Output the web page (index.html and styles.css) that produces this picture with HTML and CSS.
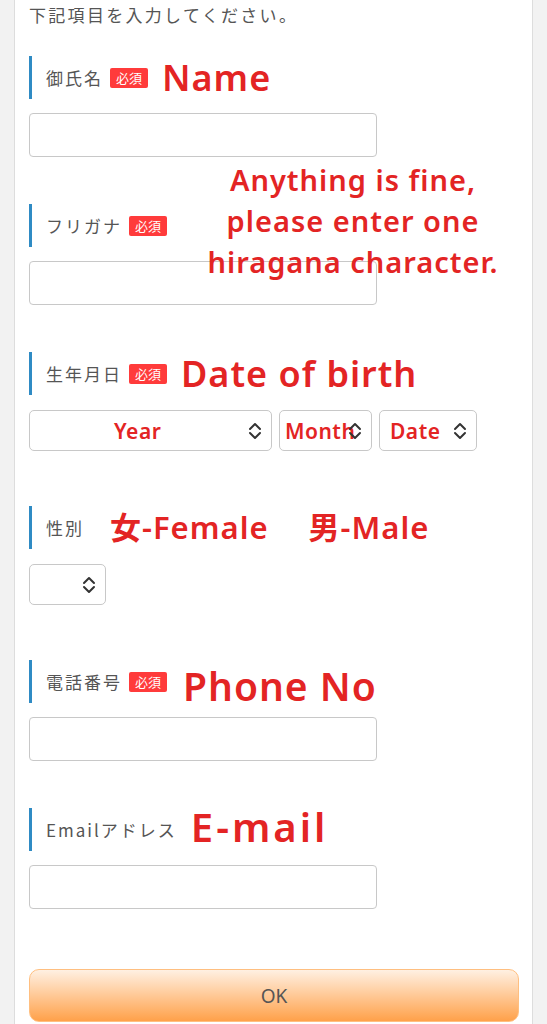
FILE: index.html
```html
<!DOCTYPE html>
<html lang="ja">
<head>
    <meta charset="UTF-8">
    <meta name="viewport" content="width=device-width, initial-scale=1.0">
    <title>お申し込みフォーム</title>
    <link rel="stylesheet" href="styles.css">
</head>
<body>
    <div class="page">
        <div class="panel">
            <p class="lead">下記項目を入力してください。</p>

            <div class="field">
                <div class="label">御氏名<span class="req">必須</span><span class="note">Name</span></div>
                <input type="text" class="text-input">
            </div>

            <div class="field furigana">
                <div class="label">フリガナ<span class="req">必須</span></div>
                <input type="text" class="text-input">
                <div class="note note-block">Anything is fine,<br>please enter one<br>hiragana character.</div>
            </div>

            <div class="field field-select">
                <div class="label">生年月日<span class="req">必須</span><span class="note">Date of birth</span></div>
                <div class="select-row">
                    <div class="select sel-year"><span class="note-sm">Year</span><svg class="chev" viewBox="0 0 14 18"><path d="M2 7l5-5 5 5M2 11l5 5 5-5" /></svg></div>
                    <div class="select sel-month"><span class="note-sm">Month</span><svg class="chev" viewBox="0 0 14 18"><path d="M2 7l5-5 5 5M2 11l5 5 5-5" /></svg></div>
                    <div class="select sel-date"><span class="note-sm">Date</span><svg class="chev" viewBox="0 0 14 18"><path d="M2 7l5-5 5 5M2 11l5 5 5-5" /></svg></div>
                </div>
            </div>

            <div class="field field-select">
                <div class="label">性別<span class="note note-gender">女-Female</span><span class="note note-gender male">男-Male</span></div>
                <div class="select-row">
                    <div class="select sel-gender"><svg class="chev" viewBox="0 0 14 18"><path d="M2 7l5-5 5 5M2 11l5 5 5-5" /></svg></div>
                </div>
            </div>

            <div class="field">
                <div class="label">電話番号<span class="req">必須</span><span class="note note-phone">Phone No</span></div>
                <input type="tel" class="text-input">
            </div>

            <div class="field field-last">
                <div class="label">Emailアドレス<span class="note note-mail">E-mail</span></div>
                <input type="email" class="text-input">
            </div>

            <button type="submit" class="ok-btn">OK</button>
        </div>
    </div>
</body>
</html>
```

FILE: styles.css
```css
body {
    margin: 0;
    background-color: #f2f2f2;
    font-family: 'Noto Sans CJK JP', 'Noto Sans', sans-serif;
    color: #555555;
}

.page {
    padding: 0 14px;
}

.panel {
    background-color: #ffffff;
    border-left: 1px solid #dddddd;
    border-right: 1px solid #dddddd;
    padding: 0 13px 2px 14px;
    min-height: 1024px;
    box-sizing: border-box;
}

.lead {
    margin: 0 0 28px;
    padding-top: 2px;
    font-size: 17px;
    line-height: 26px;
    letter-spacing: 2.3px;
}

.field {
    position: relative;
    margin-bottom: 47px;
}

.field-select {
    margin-bottom: 55px;
}

.field-last {
    margin-bottom: 60px;
}

.label {
    display: flex;
    align-items: center;
    height: 43px;
    border-left: 3px solid #2f8bc4;
    padding-left: 14px;
    font-size: 17px;
    letter-spacing: 2px;
    white-space: nowrap;
}

.req {
    display: inline-block;
    margin-left: 7px;
    padding: 0 6px;
    height: 20px;
    line-height: 20px;
    background-color: #ff3b3b;
    color: #ffffff;
    font-size: 13px;
    letter-spacing: 0;
    border-radius: 2px;
}

.note {
    color: #e32424;
    font-family: 'Noto Sans', 'Noto Sans CJK JP', sans-serif;
    font-weight: 600;
    font-size: 36px;
    letter-spacing: 1px;
    line-height: 1;
    margin-left: 14px;
}

.note-gender {
    font-size: 31px;
    margin-left: 26px;
}

.note-gender.male {
    margin-left: 40px;
}

.note-phone {
    font-size: 39px;
    margin-top: 8px;
    margin-left: 16px;
}

.note-mail {
    font-size: 40px;
    letter-spacing: 3px;
    margin-left: 14px;
    margin-top: -6px;
}

.note-block {
    position: absolute;
    left: 170px;
    top: -45px;
    width: 308px;
    margin: 0;
    text-align: center;
    font-size: 29px;
    line-height: 41px;
}

.text-input {
    display: block;
    width: 348px;
    height: 44px;
    margin-top: 14px;
    box-sizing: border-box;
    border: 1px solid #c8c8c8;
    border-radius: 4px;
    background-color: #ffffff;
    outline: none;
}

.select-row {
    display: flex;
    gap: 7px;
    margin-top: 15px;
}

.select {
    position: relative;
    display: flex;
    align-items: center;
    height: 41px;
    box-sizing: border-box;
    border: 1px solid #c8c8c8;
    border-radius: 5px;
    background-color: #ffffff;
}

.sel-year {
    width: 243px;
    padding-left: 84px;
}

.sel-month {
    width: 93px;
    padding-left: 5px;
}

.sel-date {
    width: 98px;
    padding-left: 10px;
}

.sel-gender {
    width: 77px;
}

.note-sm {
    color: #e32424;
    font-family: 'Noto Sans', sans-serif;
    font-weight: 600;
    font-size: 21px;
    letter-spacing: 0.5px;
}

.chev {
    position: absolute;
    right: 9px;
    top: 11px;
    width: 14px;
    height: 18px;
    fill: none;
    stroke: #333333;
    stroke-width: 2;
    stroke-linecap: round;
    stroke-linejoin: round;
}

.ok-btn {
    display: block;
    width: 490px;
    height: 53px;
    border: 1px solid #ffbf80;
    border-radius: 10px;
    background: linear-gradient(to bottom, #fff0e2, #ffa14a);
    color: #555555;
    font-family: 'Noto Sans', sans-serif;
    font-size: 19px;
    cursor: pointer;
}
```
